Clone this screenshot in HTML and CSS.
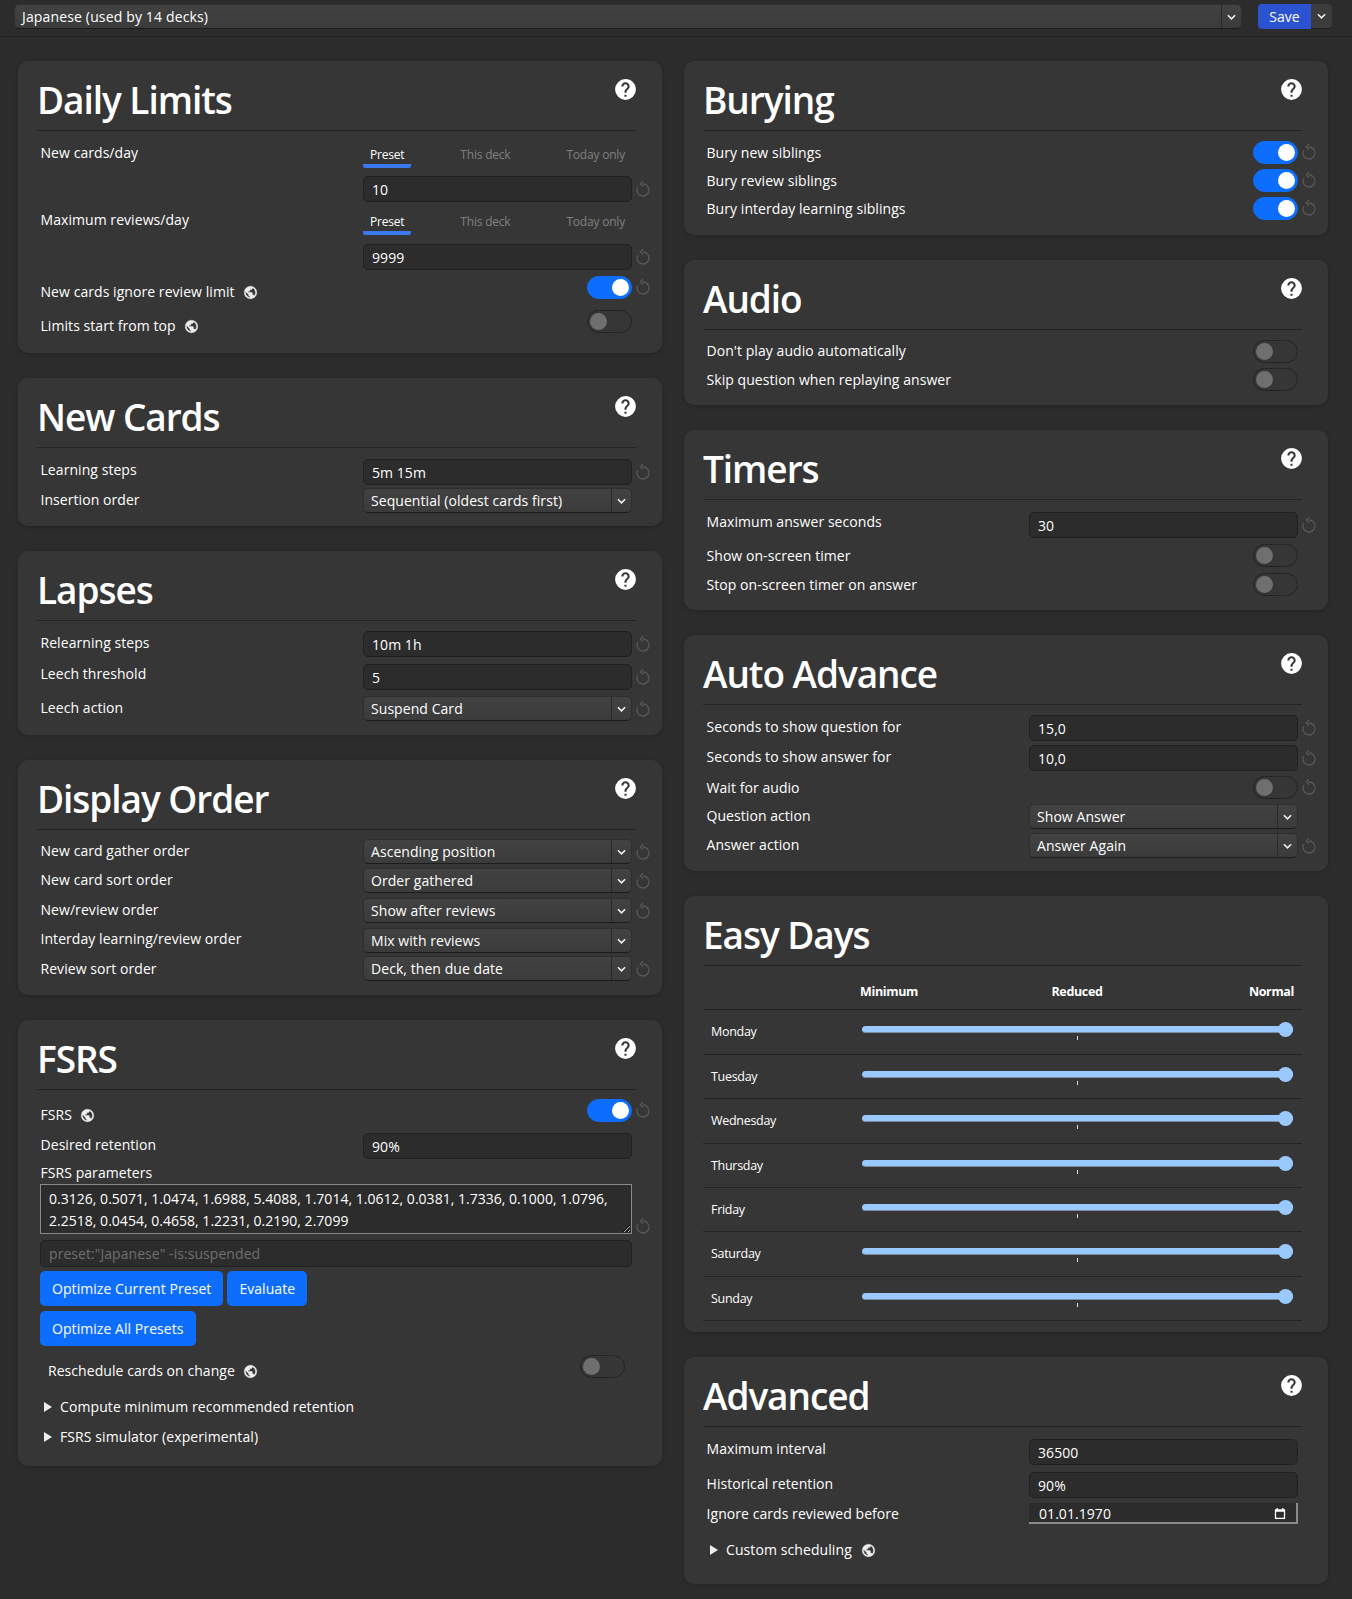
FILE: index.html
```html
<!DOCTYPE html>
<html lang="en">
<head>
<meta charset="utf-8">
<title>Deck options</title>
<link rel="stylesheet" href="styles.css">
</head>
<body>
<svg class="sprite" width="0" height="0" aria-hidden="true">
  <symbol id="help" viewBox="0 0 24 24"><path fill="currentColor" d="M15.07,11.25L14.17,12.17C13.45,12.89 13,13.5 13,15H11V14.5C11,13.39 11.45,12.39 12.17,11.67L13.41,10.41C13.78,10.05 14,9.55 14,9C14,7.89 13.1,7 12,7A2,2 0 0,0 10,9H8A4,4 0 0,1 12,5A4,4 0 0,1 16,9C16,9.88 15.64,10.67 15.07,11.25M13,19H11V17H13M12,2A10,10 0 0,0 2,12A10,10 0 0,0 12,22A10,10 0 0,0 22,12C22,6.47 17.5,2 12,2Z"/></symbol>
  <symbol id="globe" viewBox="0 0 24 24"><path fill="currentColor" stroke="currentColor" stroke-width=".7" d="M17.9,17.39C17.64,16.59 16.89,16 16,16H15V13A1,1 0 0,0 14,12H8V10H10A1,1 0 0,0 11,9V7H13A2,2 0 0,0 15,5V4.59C17.93,5.77 20,8.64 20,12C20,14.08 19.2,15.97 17.9,17.39M11,19.93C7.05,19.44 4,16.08 4,12C4,11.38 4.08,10.78 4.21,10.21L9,15V16A2,2 0 0,0 11,18M12,2A10,10 0 0,0 2,12A10,10 0 0,0 12,22A10,10 0 0,0 22,12A10,10 0 0,0 12,2Z"/></symbol>
  <symbol id="revert" viewBox="0 0 16 18"><path fill="none" stroke="currentColor" stroke-width="1.3" d="M8 4a6 6 0 1 1-5.3 3.2M8 1.2 5.4 4 8 6.6"/></symbol>
  <symbol id="chev" viewBox="0 0 10 6"><path fill="none" stroke="currentColor" stroke-width="1.8" d="M1 1l4 4 4-4"/></symbol>
  <symbol id="cal" viewBox="0 0 14 14"><path fill="currentColor" d="M1 2h2V0.5h1.5V2h5V0.5H11V2h2v11.5H1ZM2.5 5v7h9V5Z"/></symbol>
</svg>

<header class="topbar">
  <div class="select preset-select"><span class="select-text">Japanese (used by 14 decks)</span><span class="select-arrow"><svg class="chev"><use href="#chev"/></svg></span></div>
  <div class="save-group"><button class="save">Save</button><button class="save-more"><svg class="chev"><use href="#chev"/></svg></button></div>
</header>

<main class="columns">
  <div class="column">

    <section class="card pb-daily">
      <div class="card-head"><h1>Daily Limits</h1><svg class="help"><use href="#help"/></svg></div>
      <div class="card-body pt-11">
        <div class="row row-tabs h68">
          <div class="label lm1">New cards/day</div>
          <div class="ctl">
            <div class="tabs"><span class="tab active">Preset</span><span class="tab">This deck</span><span class="tab">Today only</span></div>
            <div class="input">10</div>
          </div>
          <svg class="rev"><use href="#revert"/></svg>
        </div>
        <div class="row row-tabs tabs-low h66">
          <div class="label">Maximum reviews/day</div>
          <div class="ctl">
            <div class="tabs"><span class="tab active">Preset</span><span class="tab">This deck</span><span class="tab">Today only</span></div>
            <div class="input">9999</div>
          </div>
          <svg class="rev"><use href="#revert"/></svg>
        </div>
        <div class="row h34">
          <div class="label lm6">New cards ignore review limit <svg class="globe"><use href="#globe"/></svg></div>
          <div class="ctl"><span class="toggle on"></span></div>
          <svg class="rev rev-t"><use href="#revert"/></svg>
        </div>
        <div class="row h23">
          <div class="label lm6">Limits start from top <svg class="globe"><use href="#globe"/></svg></div>
          <div class="ctl"><span class="toggle"></span></div>
        </div>
      </div>
    </section>

    <section class="card pb-13">
      <div class="card-head"><h1>New Cards</h1><svg class="help"><use href="#help"/></svg></div>
      <div class="card-body pt-11">
        <div class="row h29"><div class="label">Learning steps</div><div class="ctl"><div class="input">5m 15m</div></div><svg class="rev"><use href="#revert"/></svg></div>
        <div class="row h25"><div class="label lm2">Insertion order</div><div class="ctl"><div class="select"><span class="select-text">Sequential (oldest cards first)</span><span class="select-arrow"><svg class="chev"><use href="#chev"/></svg></span></div></div></div>
      </div>
    </section>

    <section class="card pb-14">
      <div class="card-head"><h1>Lapses</h1><svg class="help"><use href="#help"/></svg></div>
      <div class="card-body pt-10">
        <div class="row h33"><div class="label lm2">Relearning steps</div><div class="ctl"><div class="input">10m 1h</div></div><svg class="rev"><use href="#revert"/></svg></div>
        <div class="row h32"><div class="label lm0">Leech threshold</div><div class="ctl"><div class="input">5</div></div><svg class="rev"><use href="#revert"/></svg></div>
        <div class="row h25"><div class="label lm2">Leech action</div><div class="ctl"><div class="select"><span class="select-text">Suspend Card</span><span class="select-arrow"><svg class="chev"><use href="#chev"/></svg></span></div></div><svg class="rev"><use href="#revert"/></svg></div>
      </div>
    </section>

    <section class="card pb-14">
      <div class="card-head"><h1>Display Order</h1><svg class="help"><use href="#help"/></svg></div>
      <div class="card-body pt-9">
        <div class="row h29"><div class="label lm2">New card gather order</div><div class="ctl"><div class="select"><span class="select-text">Ascending position</span><span class="select-arrow"><svg class="chev"><use href="#chev"/></svg></span></div></div><svg class="rev"><use href="#revert"/></svg></div>
        <div class="row h30"><div class="label lm2">New card sort order</div><div class="ctl"><div class="select"><span class="select-text">Order gathered</span><span class="select-arrow"><svg class="chev"><use href="#chev"/></svg></span></div></div><svg class="rev"><use href="#revert"/></svg></div>
        <div class="row h30"><div class="label lm2">New/review order</div><div class="ctl"><div class="select"><span class="select-text">Show after reviews</span><span class="select-arrow"><svg class="chev"><use href="#chev"/></svg></span></div></div><svg class="rev"><use href="#revert"/></svg></div>
        <div class="row h28"><div class="label lm1">Interday learning/review order</div><div class="ctl"><div class="select"><span class="select-text">Mix with reviews</span><span class="select-arrow"><svg class="chev"><use href="#chev"/></svg></span></div></div></div>
        <div class="row h25"><div class="label lm3">Review sort order</div><div class="ctl"><div class="select"><span class="select-text">Deck, then due date</span><span class="select-arrow"><svg class="chev"><use href="#chev"/></svg></span></div></div><svg class="rev"><use href="#revert"/></svg></div>
      </div>
    </section>

    <section class="card pb-fsrs">
      <div class="card-head"><h1>FSRS</h1><svg class="help"><use href="#help"/></svg></div>
      <div class="card-body pt-9">
        <div class="row h34"><div class="label lm6">FSRS <svg class="globe"><use href="#globe"/></svg></div><div class="ctl"><span class="toggle on"></span></div><svg class="rev rev-t"><use href="#revert"/></svg></div>
        <div class="row h30"><div class="label lm2">Desired retention</div><div class="ctl"><div class="input">90%</div></div></div>
        <div class="label-line">FSRS parameters</div>
        <div class="row-full">
          <textarea class="params" rows="2" spellcheck="false">0.3126, 0.5071, 1.0474, 1.6988, 5.4088, 1.7014, 1.0612, 0.0381, 1.7336, 0.1000, 1.0796, 2.2518, 0.0454, 0.4658, 1.2231, 0.2190, 2.7099</textarea>
          <svg class="rev rev-end"><use href="#revert"/></svg>
        </div>
        <div class="row-full search-row"><div class="input placeholder">preset:"Japanese" -is:suspended</div></div>
        <div class="buttons"><button class="btn">Optimize Current Preset</button><button class="btn">Evaluate</button></div>
        <div class="buttons btn-second"><button class="btn">Optimize All Presets</button></div>
        <div class="resched">
          <div class="label lm5">Reschedule cards on change <svg class="globe"><use href="#globe"/></svg></div>
          <span class="toggle"></span>
        </div>
        <div class="disclosure first"><span class="tri"></span>Compute minimum recommended retention</div>
        <div class="disclosure second"><span class="tri"></span>FSRS simulator (experimental)</div>
      </div>
    </section>

  </div>
  <div class="column">

    <section class="card pb-15">
      <div class="card-head"><h1>Burying</h1><svg class="help"><use href="#help"/></svg></div>
      <div class="card-body pt-10">
        <div class="row h28"><div class="label lm2">Bury new siblings</div><div class="ctl"><span class="toggle on"></span></div><svg class="rev rev-t"><use href="#revert"/></svg></div>
        <div class="row h28"><div class="label lm2">Bury review siblings</div><div class="ctl"><span class="toggle on"></span></div><svg class="rev rev-t"><use href="#revert"/></svg></div>
        <div class="row h23"><div class="label lm2">Bury interday learning siblings</div><div class="ctl"><span class="toggle on"></span></div><svg class="rev rev-t"><use href="#revert"/></svg></div>
      </div>
    </section>

    <section class="card pb-14">
      <div class="card-head"><h1>Audio</h1><svg class="help"><use href="#help"/></svg></div>
      <div class="card-body pt-10">
        <div class="row h28"><div class="label">Don't play audio automatically</div><div class="ctl"><span class="toggle"></span></div></div>
        <div class="row h23"><div class="label lm2">Skip question when replaying answer</div><div class="ctl"><span class="toggle"></span></div></div>
      </div>
    </section>

    <section class="card pb-15">
      <div class="card-head"><h1>Timers</h1><svg class="help"><use href="#help"/></svg></div>
      <div class="card-body pt-12">
        <div class="row h32"><div class="label lm0">Maximum answer seconds</div><div class="ctl"><div class="input">30</div></div><svg class="rev"><use href="#revert"/></svg></div>
        <div class="row h29"><div class="label lm2">Show on-screen timer</div><div class="ctl"><span class="toggle"></span></div></div>
        <div class="row h22"><div class="label lm2">Stop on-screen timer on answer</div><div class="ctl"><span class="toggle"></span></div></div>
      </div>
    </section>

    <section class="card pb-13">
      <div class="card-head"><h1>Auto Advance</h1><svg class="help"><use href="#help"/></svg></div>
      <div class="card-body pt-10">
        <div class="row h30"><div class="label lm2">Seconds to show question for</div><div class="ctl"><div class="input">15,0</div></div><svg class="rev"><use href="#revert"/></svg></div>
        <div class="row h31"><div class="label lm2">Seconds to show answer for</div><div class="ctl"><div class="input">10,0</div></div><svg class="rev"><use href="#revert"/></svg></div>
        <div class="row h28"><div class="label lm2">Wait for audio</div><div class="ctl"><span class="toggle"></span></div><svg class="rev rev-t"><use href="#revert"/></svg></div>
        <div class="row h29"><div class="label lm2">Question action</div><div class="ctl"><div class="select"><span class="select-text">Show Answer</span><span class="select-arrow"><svg class="chev"><use href="#chev"/></svg></span></div></div></div>
        <div class="row h25"><div class="label lm2">Answer action</div><div class="ctl"><div class="select"><span class="select-text">Answer Again</span><span class="select-arrow"><svg class="chev"><use href="#chev"/></svg></span></div></div><svg class="rev"><use href="#revert"/></svg></div>
      </div>
    </section>

    <section class="card pb-11">
      <div class="card-head"><h1>Easy Days</h1></div>
      <div class="easy">
        <div class="easy-row easy-header"><span class="easy-day"></span><div class="easy-scale"><b>Minimum</b><b>Reduced</b><b>Normal</b></div></div>
        <div class="easy-row"><span class="easy-day">Monday</span><div class="slider"><span class="thumb"></span><span class="tick"></span></div></div>
        <div class="easy-row"><span class="easy-day">Tuesday</span><div class="slider"><span class="thumb"></span><span class="tick"></span></div></div>
        <div class="easy-row"><span class="easy-day">Wednesday</span><div class="slider"><span class="thumb"></span><span class="tick"></span></div></div>
        <div class="easy-row"><span class="easy-day">Thursday</span><div class="slider"><span class="thumb"></span><span class="tick"></span></div></div>
        <div class="easy-row"><span class="easy-day">Friday</span><div class="slider"><span class="thumb"></span><span class="tick"></span></div></div>
        <div class="easy-row"><span class="easy-day">Saturday</span><div class="slider"><span class="thumb"></span><span class="tick"></span></div></div>
        <div class="easy-row"><span class="easy-day">Sunday</span><div class="slider"><span class="thumb"></span><span class="tick"></span></div></div>
      </div>
    </section>

    <section class="card pb-adv">
      <div class="card-head"><h1>Advanced</h1><svg class="help"><use href="#help"/></svg></div>
      <div class="card-body pt-12">
        <div class="row h33"><div class="label lm0">Maximum interval</div><div class="ctl"><div class="input">36500</div></div></div>
        <div class="row h31"><div class="label lm2">Historical retention</div><div class="ctl"><div class="input">90%</div></div></div>
        <div class="row h21"><div class="label">Ignore cards reviewed before</div><div class="ctl"><div class="date"><span>01.01.1970</span><svg class="cal"><use href="#cal"/></svg></div></div></div>
        <div class="disclosure adv"><span class="tri"></span>Custom scheduling <svg class="globe"><use href="#globe"/></svg></div>
      </div>
    </section>

  </div>
</main>
</body>
</html>
```
FILE: styles.css
```css
* { box-sizing: border-box; }
html, body { margin: 0; padding: 0; }
body {
  background: #2c2c2c;
  color: #fff;
  font-family: "Open Sans", "Noto Sans", sans-serif;
  font-size: 14px;
  letter-spacing: .06px;
  color-scheme: dark;
  height: 1599px;
  overflow: hidden;
}
.sprite { position: absolute; }
button { font: inherit; letter-spacing: inherit; color: inherit; border: 0; padding: 0; }

.topbar {
  height: 37px;
  border-bottom: 1px solid #232323;
  display: flex;
  align-items: flex-start;
  padding: 4px 20px 0 14px;
  gap: 16px;
}
.preset-select { flex: 1; height: 25px; letter-spacing: .15px; }
.save-group { display: flex; height: 25px; }
.save { width: 53px; background: #2b52d0; border-radius: 4px 0 0 4px; }
.save-more { width: 21px; background: #3c3c3c; border-radius: 0 4px 4px 0; border-bottom: 1px solid #1f1f1f; }
.chev { width: 9px; height: 6px; color: #eee; display: block; margin: 0 auto; }

.columns {
  display: grid;
  grid-template-columns: 644px 644px;
  gap: 22px;
  padding: 24px 0 0 18px;
  align-items: start;
}
.column { display: flex; flex-direction: column; gap: 25px; }

.card {
  background: #363636;
  border-radius: 10px;
  padding: 0 26px 0 19px;
  box-shadow: 0 1px 4px rgba(0, 0, 0, .2);
}
.pb-11 { padding-bottom: 11px; }
.pb-13 { padding-bottom: 13px; }
.pb-14 { padding-bottom: 14px; }
.pb-15 { padding-bottom: 15px; }
.pb-daily { padding-bottom: 20px; }
.pb-fsrs { padding-bottom: 19px; }
.pb-adv { padding-bottom: 24px; }

.card-head {
  height: 70px;
  border-bottom: 1px solid #232323;
  position: relative;
}
.card-head h1 {
  margin: 0;
  font-size: 37px;
  font-weight: 600;
  line-height: 50px;
  padding-top: 14px;
  letter-spacing: -1.05px;
}
.help {
  position: absolute;
  right: -2px;
  top: 16px;
  width: 25px;
  height: 25px;
  color: #fff;
}

.pt-9 { padding-top: 9px; }
.pt-10 { padding-top: 10px; }
.pt-11 { padding-top: 11px; }
.pt-12 { padding-top: 12px; }

.row {
  display: grid;
  grid-template-columns: 1fr 269px 24px;
  margin-right: -20px;
  padding-left: 3.5px;
  align-items: start;
}
.h21 { height: 21px; } .h22 { height: 22px; } .h23 { height: 23px; } .h25 { height: 25px; }
.h28 { height: 28px; } .h29 { height: 29px; } .h30 { height: 30px; } .h31 { height: 31px; }
.h32 { height: 32px; } .h33 { height: 33px; } .h34 { height: 34px; } .h66 { height: 66px; } .h68 { height: 68px; }

.label { line-height: 20px; margin-top: 1px; white-space: nowrap; }
.lm0 { margin-top: 0; } .lm1 { margin-top: 1px; } .lm2 { margin-top: 2px; }
.lm3 { margin-top: 3px; } .lm5 { margin-top: 6px; } .lm6 { margin-top: 6px; }
.globe { width: 15px; height: 15px; color: #eee; vertical-align: -3px; margin-left: 4.5px; }

.ctl { display: flex; flex-direction: column; }
.ctl .toggle { align-self: flex-end; }

.input {
  height: 26px;
  background: #2c2c2c;
  border: 1px solid #202020;
  border-radius: 5px;
  padding: 0 8px;
  line-height: 26px;
}
.placeholder { color: #6f6f6f; height: 27px; }

.select {
  height: 25px;
  display: flex;
  background: linear-gradient(#424242, #3b3b3b);
  border: 1px solid #2e2e2e;
  border-bottom-color: #1c1c1c;
  border-radius: 5px;
}
.select-text { flex: 1; padding: 0 7px; line-height: 23px; }
.select-arrow { width: 20px; border-left: 1px solid #2a2a2a; display: flex; align-items: center; }

.rev { width: 16px; height: 18px; color: #595959; margin: 4px 0 0 3px; }
.rev-t { margin-top: 2px; }
.row-tabs .rev { margin-top: 38px; }

.tabs { height: 26px; display: flex; justify-content: space-between; margin-bottom: 8px; }
.tabs-low .label { margin-top: 0; }
.tabs-low .tabs { margin-top: -1px; margin-bottom: 9px; }
.tab {
  padding: 0 7px;
  line-height: 26px;
  font-size: 12px;
  color: #808080;
  letter-spacing: -.2px;
}
.tab.active { color: #fff; border-bottom: 4px solid #3a78ee; border-radius: 2px; height: 26px; }

.toggle {
  width: 45px;
  height: 23px;
  border-radius: 12px;
  border: 1px solid #232323;
  background: #363636;
  position: relative;
  display: block;
}
.toggle::after {
  content: "";
  position: absolute;
  left: 2px;
  top: 2px;
  width: 17px;
  height: 17px;
  border-radius: 50%;
  background: #6f6f6f;
}
.toggle.on { background: #0d6efd; border-color: #0d6efd; }
.toggle.on::after { left: auto; right: 2px; background: #fff; }

.label-line { line-height: 20px; padding-left: 3.5px; height: 20px; margin-bottom: 1px; }
.row-full {
  display: grid;
  grid-template-columns: 1fr 24px;
  margin-right: -20px;
  padding-left: 3px;
  align-items: end;
}
.params {
  display: block;
  width: 100%;
  height: 50px;
  background: #2c2c2c;
  color: #fff;
  border: 1px solid #8a8a8a;
  border-radius: 0;
  padding: 3px 8px;
  font: inherit;
  line-height: 22px;
  letter-spacing: .02px;
  resize: both;
  overflow: hidden;
  outline: 0;
}
.rev-end { margin: 0 0 -1px 3px; }
.search-row { margin-top: 6px; }

.buttons { display: flex; gap: 4px; padding-left: 3px; margin-top: 4px; }
.btn-second { margin-top: 5px; }
.btn {
  height: 35px;
  padding: 0 12px;
  background: #0d6efd;
  border-radius: 5px;
}
.resched {
  display: flex;
  justify-content: space-between;
  align-items: flex-start;
  margin-top: 9px;
  padding: 0 11px 0 11px;
}
.resched .label { margin-top: 6px; }

.disclosure { line-height: 20px; padding-left: 7px; display: flex; align-items: center; white-space: pre; letter-spacing: .09px; }
.disclosure .globe { margin-left: 5px; }
.tri {
  width: 0; height: 0;
  border-left: 8px solid #eee;
  border-top: 5px solid transparent;
  border-bottom: 5px solid transparent;
  margin-right: 8px;
}
.first { margin-top: 16px; }
.second { margin-top: 10px; }
.adv { margin-top: 16px; }

.easy-row {
  height: 44.4px;
  border-bottom: 1px solid #232323;
  display: flex;
  padding-left: 8px;
  padding-right: 9px;
}
.easy-day { width: 151px; font-size: 12.5px; line-height: 44px; letter-spacing: -.3px; }
.easy-scale {
  flex: 1;
  display: grid;
  grid-template-columns: 1fr auto 1fr;
  margin: 0 -1px 0 -2px;
  font-size: 12.5px;
  line-height: 51px;
  letter-spacing: -.35px;
}
.easy-scale b:last-child { text-align: right; }
.slider {
  flex: 1;
  position: relative;
  height: 7px;
  margin-top: 16px;
  background: #99c9ff;
  border-radius: 4px;
  border: 0 solid #7b8a9c;
  border-bottom-width: 1px;
}
.thumb {
  position: absolute;
  right: 0;
  top: -4px;
  width: 15px;
  height: 15px;
  border-radius: 50%;
  background: #99c9ff;
}
.tick {
  position: absolute;
  left: calc(50% - 1px);
  top: 10px;
  width: 1px;
  height: 4px;
  background: #ddd;
}

.date {
  height: 21px;
  display: flex;
  justify-content: space-between;
  align-items: center;
  background: #2c2c2c;
  border-right: 2px solid #8a8a8a;
  border-bottom: 2px solid #8a8a8a;
  padding: 1px 10px 0 10px;
}
.cal { width: 12px; height: 13px; color: #fff; }
```
